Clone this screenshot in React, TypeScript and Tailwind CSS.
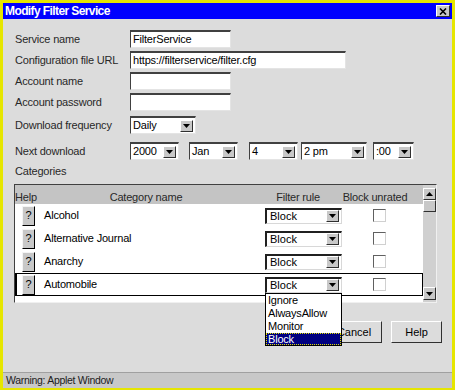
import React from "react";

const sunken =
  "bg-white border-t-2 border-l border-r border-b border-t-[#404040] border-l-[#404040] border-r-[#e4e4e4] border-b-[#e4e4e4]";
const raised =
  "bg-[#c8c8c8] border border-t-white border-l-white border-r-[#303030] border-b-[#303030]";

function Arrow({ up }: { up?: boolean }) {
  return (
    <svg width="7" height="4" viewBox="0 0 7 4">
      {up ? <polygon points="0,4 7,4 3.5,0" fill="#000" /> : <polygon points="0,0 7,0 3.5,4" fill="#000" />}
    </svg>
  );
}

function ArrowBtn() {
  return (
    <div className={`w-[13px] h-[12px] flex items-center justify-center ${raised}`}>
      <Arrow />
    </div>
  );
}

function Sel({ value, cls }: { value: string; cls: string }) {
  return (
    <div className={`flex items-center h-[18px] pl-[2px] pr-[2px] ${sunken} ${cls}`}>
      <div className="flex-1 text-[11px] tracking-[-0.2px] text-black leading-none">{value}</div>
      <ArrowBtn />
    </div>
  );
}

function Input({ value, cls }: { value?: string; cls: string }) {
  return (
    <div className={`h-[18px] flex items-center pl-[2px] ${sunken} ${cls}`}>
      <span className="text-[11px] tracking-[-0.2px] text-black leading-none">{value}</span>
    </div>
  );
}

function Row({ label, mt, children }: { label: string; mt: string; children: React.ReactNode }) {
  return (
    <div className={`flex items-center h-[18px] ${mt}`}>
      <div className="w-[115px] text-[11px] tracking-[-0.2px] text-[#282828] leading-none">{label}</div>
      {children}
    </div>
  );
}

function TableRow({ name, active }: { name: string; active?: boolean }) {
  return (
    <div
      className={`flex items-center h-[23px] border-t border-b border-r border-l-2 ${
        active ? "border-black" : "border-transparent"
      }`}
    >
      <div className="ml-[5px] w-[13px] h-[20px] flex items-center justify-center text-[11px] text-black bg-[#c8c8c8] border border-t-[#f4f4f4] border-l-[#f4f4f4] border-r-black border-b-black">
        ?
      </div>
      <div className="ml-[9px] w-[221px] text-[11px] tracking-[-0.2px] text-black leading-none">{name}</div>
      <div className="w-[77px] h-[16px] flex items-center pl-[3px] pr-[2px] bg-white border-t-2 border-l-2 border-r border-b border-t-[#202020] border-l-[#202020] border-r-[#d8d8d8] border-b-[#d8d8d8]">
        <div className="flex-1 text-[11px] text-black leading-none">Block</div>
        <ArrowBtn />
      </div>
      <div className="ml-[31px] w-[13px] h-[13px] bg-white border border-t-[#606060] border-l-[#606060] border-r-[#d0d0d0] border-b-[#d0d0d0]" />
    </div>
  );
}

export default function App() {
  return (
    <div className="relative w-[455px] h-[390px] overflow-hidden font-['Liberation_Sans',Arial,sans-serif] border-t-[3px] border-x-[3px] border-b-[2px] border-[#e6e600] bg-[#dcdcdc] flex flex-col">
      {/* Title bar */}
      <div className="h-[16px] bg-[#0000ff] flex items-center pl-[2px] pr-[2px]">
        <div className="flex-1 text-white font-bold text-[12px] tracking-[-0.6px] leading-none">Modify Filter Service</div>
        <div className="w-[14px] h-[12px] flex items-center justify-center bg-[#c8c8c8] border border-t-white border-l-white border-r-[#303030] border-b-[#303030]">
          <svg width="8" height="7" viewBox="0 0 8 7">
            <path d="M1 0.5 L7 6.5 M7 0.5 L1 6.5" stroke="#000" strokeWidth="1.6" />
          </svg>
        </div>
      </div>

      {/* Body */}
      <div className="flex-1 flex flex-col pl-[12px] pr-[10px]">
        <Row label="Service name" mt="mt-[11px]">
          <Input value="FilterService" cls="w-[101px]" />
        </Row>
        <Row label="Configuration file URL" mt="mt-[3px]">
          <Input value="https://filterservice/filter.cfg" cls="w-[216px]" />
        </Row>
        <Row label="Account name" mt="mt-[3px]">
          <Input cls="w-[101px]" />
        </Row>
        <Row label="Account password" mt="mt-[3px]">
          <Input cls="w-[101px]" />
        </Row>
        <Row label="Download frequency" mt="mt-[5px]">
          <Sel value="Daily" cls="w-[66px]" />
        </Row>
        <Row label="Next download" mt="mt-[8px]">
          <Sel value="2000" cls="w-[49px]" />
          <Sel value="Jan" cls="w-[49px] ml-[10px]" />
          <Sel value="4" cls="w-[49px] ml-[11px]" />
          <Sel value="2 pm" cls="w-[66px] ml-[3px]" />
          <Sel value=":00" cls="w-[41px] ml-[6px]" />
        </Row>
        <div className="mt-[3px] h-[16px] flex items-center text-[11px] tracking-[-0.2px] text-[#282828] leading-none">
          Categories
        </div>

        {/* Table */}
        <div className="mt-[5px] -ml-px w-[423px] h-[119px] flex border-t border-l border-t-[#404040] border-l-[#404040] border-b border-r border-b-[#f0f0f0] border-r-[#f0f0f0]">
          <div className="flex-1 flex flex-col bg-white">
            <div className="h-[19px] bg-[#c4c4c4] flex items-end text-[11px] tracking-[-0.2px] text-[#282828] leading-[14px]">
              <div className="w-[22px]">Help</div>
              <div className="w-[218px] text-center">Category name</div>
              <div className="w-[86px] text-center">Filter rule</div>
              <div className="w-[68px] text-center">Block unrated</div>
            </div>
            <TableRow name="Alcohol" />
            <TableRow name="Alternative Journal" />
            <TableRow name="Anarchy" />
            <TableRow name="Automobile" active />
          </div>
          <div className="w-[13px] flex flex-col bg-[#d0d0d0] pb-[2px]">
            <div className={`mt-[3px] h-[12px] flex items-center justify-center ${raised}`}>
              <Arrow up />
            </div>
            <div className={`h-[12px] ${raised}`} />
            <div className="flex-1" />
            <div className={`h-[13px] flex items-center justify-center ${raised}`}>
              <Arrow />
            </div>
          </div>
        </div>

        {/* Buttons */}
        <div className="mt-[18px] flex justify-end">
          <div className="w-[56px] h-[22px] flex items-center justify-center text-[11px] text-black bg-[#dcdcdc] border border-t-white border-l-white border-r-[#303030] border-b-[#303030]">
            Cancel
          </div>
          <div className="ml-[9px] w-[51px] h-[22px] flex items-center justify-center text-[11px] text-black bg-[#dcdcdc] border border-t-white border-l-white border-r-[#303030] border-b-[#303030]">
            Help
          </div>
        </div>
        <div className="flex-1" />
      </div>

      {/* Status bar */}
      <div className="h-[16px] bg-[#c8c8c8] border-t border-[#a0a0a0] flex items-center pl-[3px] text-[10.5px] tracking-[-0.3px] text-[#202020] leading-none">
        Warning: Applet Window
      </div>

      {/* Open dropdown list */}
      <div className="absolute left-[262px] top-[290px] w-[77px] h-[53px] bg-white border border-black flex flex-col text-[11px] tracking-[-0.2px] leading-none text-black">
        <div className="h-[13px] flex items-center pl-[2px]">Ignore</div>
        <div className="h-[13px] flex items-center pl-[2px]">AlwaysAllow</div>
        <div className="h-[13px] flex items-center pl-[2px]">Monitor</div>
        <div className="h-[12px] flex items-center pl-[2px] bg-[#000080] text-white outline-1 outline-dotted outline-[#e0e000] -outline-offset-1">
          Block
        </div>
      </div>
    </div>
  );
}
